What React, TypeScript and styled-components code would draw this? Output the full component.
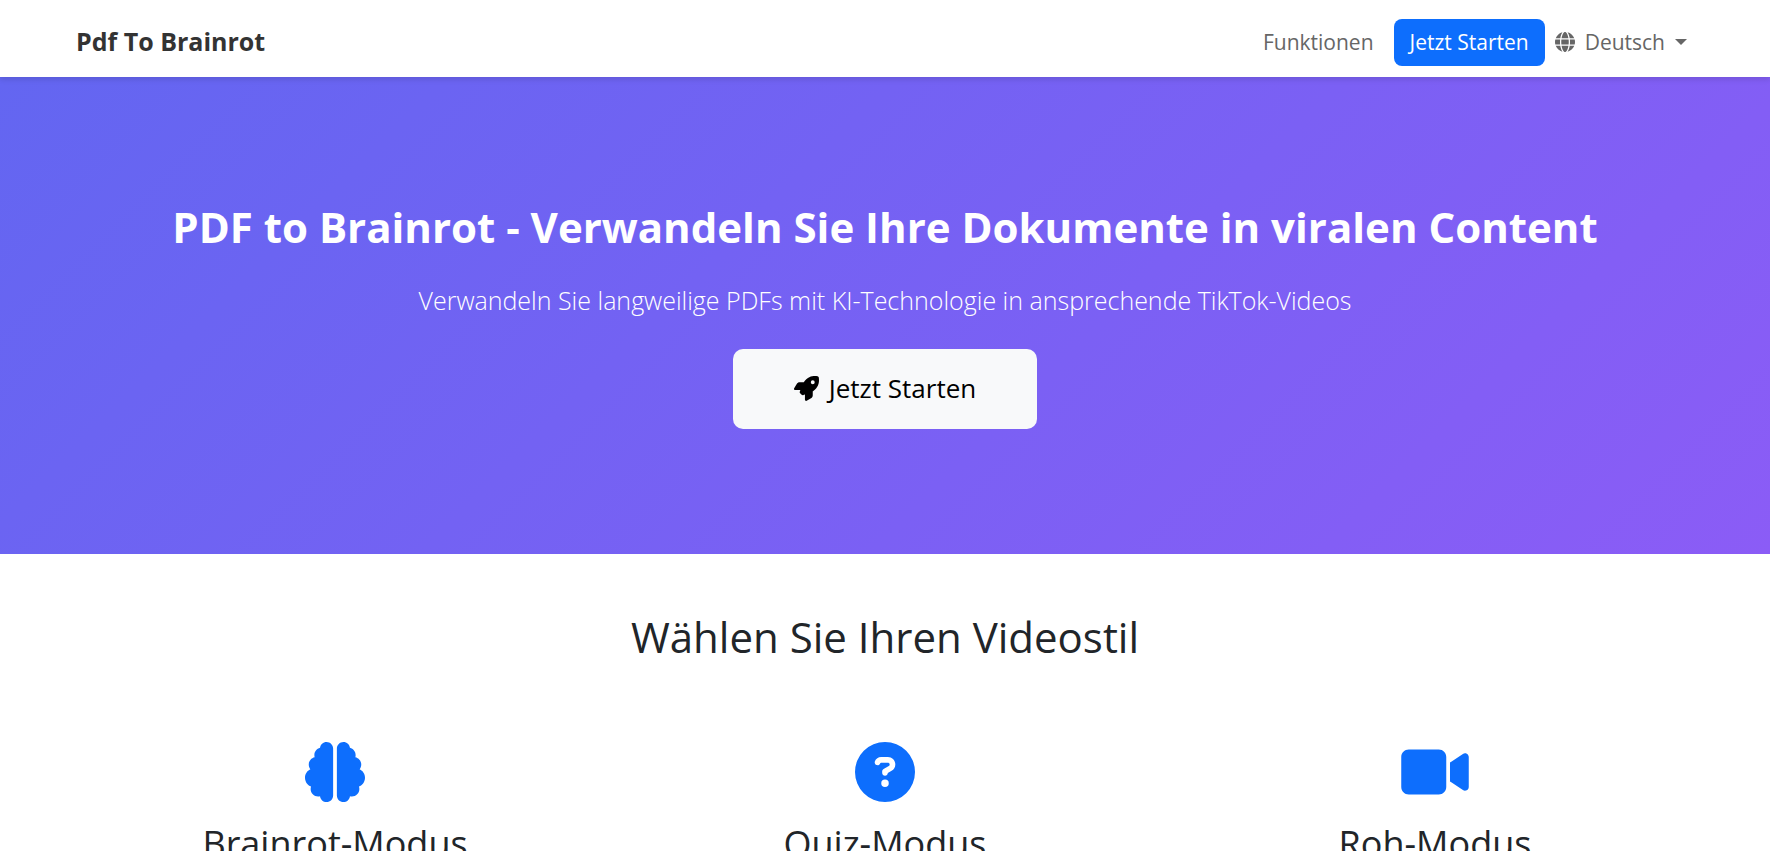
import React from "react";
import styled, { createGlobalStyle } from "styled-components";
import {
  FaBrain,
  FaCircleQuestion,
  FaGlobe,
  FaRocket,
  FaVideo,
} from "react-icons/fa6";

const GlobalStyle = createGlobalStyle`
  *, *::before, *::after { box-sizing: border-box; }
  body {
    margin: 0;
    background: #fff;
    color: #212529;
    font-family: "Segoe UI", "Open Sans", "Noto Sans", sans-serif;
    font-size: 21px;
    line-height: 32px;
    overflow-x: hidden;
  }
`;

const Container = styled.div`
  width: 100%;
  max-width: 1650px;
  margin: 0 auto;
  padding: 0 16px;
`;

const Header = styled.header`
  position: relative;
  z-index: 1;
  background: #fff;
  box-shadow: 0 3px 5px rgba(0, 0, 0, 0.1);
`;

const NavBar = styled(Container)`
  display: flex;
  align-items: center;
  justify-content: space-between;
  min-height: 77px;
  padding-top: 8px;
`;

const Brand = styled.a`
  padding-bottom: 4px;
  color: #333;
  font-size: 25px;
  font-weight: 700;
  text-decoration: none;
`;

const NavLinks = styled.nav`
  display: flex;
  align-items: center;
`;

const NavLink = styled.a`
  padding: 0 10px 2px;
  color: #666;
  text-decoration: none;
`;

const NavButton = styled.a`
  margin-left: 10px;
  padding: 7px 16px 8px;
  border-radius: 8px;
  background: #0d6efd;
  color: #fff;
  font-weight: 500;
  text-decoration: none;
`;

const LanguageButton = styled.button`
  display: flex;
  align-items: center;
  gap: 10px;
  padding: 0 7px 2px 10px;
  border: 0;
  background: none;
  color: #666;
  font: inherit;
  cursor: pointer;

  svg {
    font-size: 20px;
  }
`;

const Caret = styled.span`
  border-top: 6px solid currentColor;
  border-right: 6px solid transparent;
  border-left: 6px solid transparent;
`;

const Hero = styled.section`
  padding: 120px 0 125px;
  background: linear-gradient(135deg, #6366f1 0%, #8b5cf6 100%);
  color: #fff;
  text-align: center;
`;

const HeroTitle = styled.h1`
  margin: 0 0 27px;
  font-size: 42px;
  font-weight: 700;
  line-height: 60px;
`;

const HeroLead = styled.p`
  margin: 0 0 33px;
  font-size: 25px;
  font-weight: 300;
  line-height: 32px;
`;

const HeroButton = styled.a`
  display: inline-flex;
  align-items: center;
  gap: 10px;
  padding: 23px 61px 25px;
  border-radius: 10px;
  background: #f8f9fa;
  color: #000;
  font-size: 26px;
  text-decoration: none;

  svg {
    font-size: 25px;
  }
`;

const Styles = styled.section`
  padding: 57px 0;
  text-align: center;
`;

const StylesTitle = styled.h2`
  margin: 0 0 66px;
  font-size: 42px;
  font-weight: 400;
  line-height: 52px;
`;

const StyleGrid = styled.div`
  display: grid;
  grid-template-columns: repeat(3, 1fr);
  gap: 32px;
`;

const StyleCard = styled.article`
  display: flex;
  flex-direction: column;
  align-items: center;
  gap: 20px;
  padding-top: 13px;

  svg {
    width: 68px;
    height: 60px;
    color: #0d6efd;
  }
`;

const CardTitle = styled.h3`
  margin: 0;
  font-size: 36px;
  font-weight: 400;
  line-height: 44px;
`;

const modes = [
  { title: "Brainrot-Modus", icon: <FaBrain /> },
  { title: "Quiz-Modus", icon: <FaCircleQuestion /> },
  { title: "Roh-Modus", icon: <FaVideo /> },
];

export default function App() {
  return (
    <>
      <GlobalStyle />
      <Header>
        <NavBar>
          <Brand href="#">Pdf To Brainrot</Brand>
          <NavLinks>
            <NavLink href="#modes">Funktionen</NavLink>
            <NavButton href="#start">Jetzt Starten</NavButton>
            <LanguageButton type="button" aria-haspopup="menu">
              <FaGlobe />
              <span>Deutsch</span>
              <Caret />
            </LanguageButton>
          </NavLinks>
        </NavBar>
      </Header>
      <main>
        <Hero>
          <Container>
            <HeroTitle>
              PDF to Brainrot - Verwandeln Sie Ihre Dokumente in viralen Content
            </HeroTitle>
            <HeroLead>
              Verwandeln Sie langweilige PDFs mit KI-Technologie in ansprechende
              TikTok-Videos
            </HeroLead>
            <HeroButton href="#start">
              <FaRocket />
              Jetzt Starten
            </HeroButton>
          </Container>
        </Hero>
        <Styles id="modes">
          <Container>
            <StylesTitle>Wählen Sie Ihren Videostil</StylesTitle>
            <StyleGrid>
              {modes.map((mode) => (
                <StyleCard key={mode.title}>
                  {mode.icon}
                  <CardTitle>{mode.title}</CardTitle>
                </StyleCard>
              ))}
            </StyleGrid>
          </Container>
        </Styles>
      </main>
    </>
  );
}
